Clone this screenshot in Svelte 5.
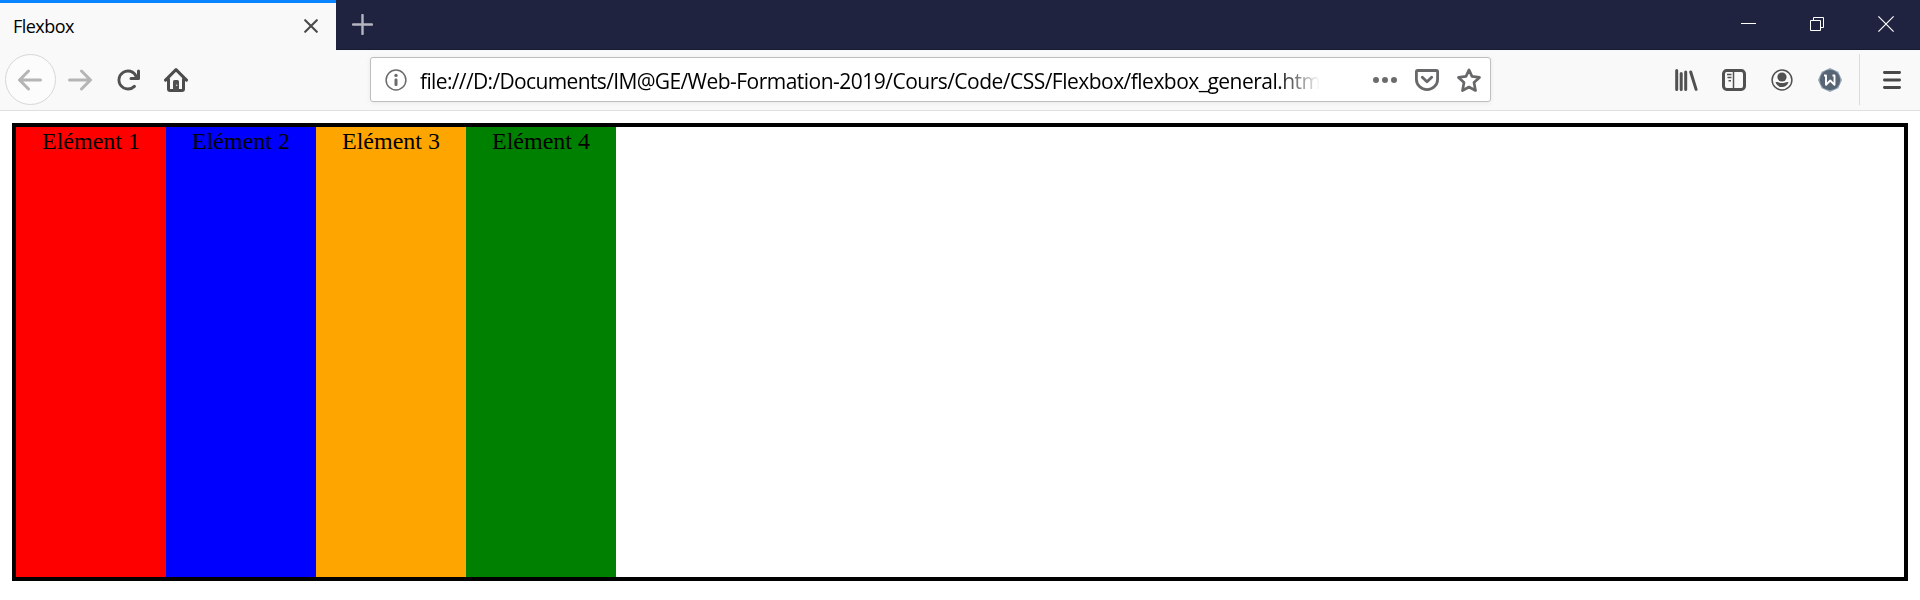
<script>
  const items = [
    { n: 1, tone: 'red' },
    { n: 2, tone: 'blue' },
    { n: 3, tone: 'orange' },
    { n: 4, tone: 'green' }
  ];
</script>

<div class="window">
  <header class="tabs">
    <div class="tab">
      <span class="title">Flexbox</span>
      <svg class="i14" viewBox="0 0 14 14"><path d="M1.2 1.2 12.8 12.8M12.8 1.2 1.2 12.8" fill="none" stroke="#4a4a4b" stroke-width="2.1" stroke-linecap="round" /></svg>
    </div>
    <svg class="plus" viewBox="0 0 21 21"><path d="M10.500 1V20M1 10.500H20" fill="none" stroke="#b5b5c1" stroke-width="2.400" stroke-linecap="round" /></svg>
    <div class="controls">
      <svg viewBox="0 0 16 16"><path d="M1 7.500H16" stroke="#fff" /></svg>
      <svg viewBox="0 0 16 16"><path d="M1.500 4.500h10v10h-10zM4.500 4.500v-3h10v10h-3" fill="none" stroke="#fff" /></svg>
      <svg viewBox="0 0 16 16"><path d="M.4.400 15.600 15.600M15.600.400.400 15.600" fill="none" stroke="#fff" stroke-width="1.150" /></svg>
    </div>
  </header>

  <nav class="toolbar">
    <div class="back">
      <svg class="dim" viewBox="0 0 16 16"><path d="M15 7H3.414l4.293-4.293a1 1 0 0 0-1.414-1.414l-6 6a1 1 0 0 0 0 1.414l6 6a1 1 0 0 0 1.414-1.414L3.414 9H15a1 1 0 0 0 0-2z" /></svg>
    </div>
    <div class="group">
      <svg class="dim" viewBox="0 0 16 16"><path d="M1 9h11.586l-4.293 4.293a1 1 0 0 0 1.414 1.414l6-6a1 1 0 0 0 0-1.414l-6-6a1 1 0 0 0-1.414 1.414L12.586 7H1a1 1 0 0 0 0 2z" /></svg>
      <svg viewBox="0 0 16 16"><path d="M15 1a1 1 0 0 0-1 1v2.418A6.995 6.995 0 1 0 8 15a6.954 6.954 0 0 0 4.950-2.050 1 1 0 0 0-1.414-1.414A5.019 5.019 0 1 1 12.549 6H10a1 1 0 0 0 0 2h5a1 1 0 0 0 1-1V2a1 1 0 0 0-1-1z" /></svg>
      <svg viewBox="0 0 16 16">
        <path d="M1 8.100 8 1.100l7 7M3 7.300V14a1 1 0 0 0 1 1h8a1 1 0 0 0 1-1V7.300" fill="none" stroke="#4c4c4d" stroke-width="2" stroke-linecap="round" stroke-linejoin="round" />
        <path d="M6 15V9a1 1 0 0 1 1-1h2a1 1 0 0 1 1 1v6z" /><circle cx="8.500" cy="11.500" r=".5" fill="#ddd" />
      </svg>
    </div>

    <div class="address">
      <svg class="soft" viewBox="0 0 24 24">
        <circle cx="12" cy="12" r="9.900" fill="none" stroke="#6b6b6c" stroke-width="1.500" />
        <circle cx="12" cy="7.400" r="1.700" /><rect x="10.500" y="10.500" width="3" height="7.500" rx="1.300" />
      </svg>
      <span class="url">file:///D:/Documents/IM@GE/<span class="mid">Web-Formation-2019/Cours/Code/CSS/Flexbox/flexbox_general.html</span></span>
      <div class="actions">
        <svg class="soft" viewBox="0 0 24 24"><circle cx="3" cy="12" r="3" /><circle cx="12" cy="12" r="3" /><circle cx="21" cy="12" r="3" /></svg>
        <svg viewBox="0 0 24 24" fill="none" stroke="#68686a" stroke-width="2.800" stroke-linecap="round" stroke-linejoin="round"><path d="M2.600 2.500h18.800q1.200 0 1.200 1.200v7.600a10.600 10.300 0 0 1-21.200 0V3.700q0-1.200 1.200-1.200z" /><path d="m7.300 9.200 4.700 4.600 4.700-4.600" /></svg>
        <svg viewBox="0 0 24 24" fill="none" stroke="#68686a" stroke-width="2.700" stroke-linejoin="round"><path d="m12 1.900 3 6.500 7.500 1-5.500 5.100 1.500 8-6.500-3.500-6.500 3.500 1.500-8-5.500-5.100 7.500-1z" /></svg>
      </div>
    </div>

    <div class="tools">
      <svg viewBox="0 0 24 24" fill="none" stroke="#515152" stroke-width="3" stroke-linecap="round"><path d="M2.700 2.600v18.800M7.200 5.500v15.900M11.700 4.100v17.300M16.700 4l5.400 17.400" /></svg>
      <svg viewBox="0 0 24 24" fill="none" stroke="#515152"><rect x="1.500" y="2.500" width="21" height="19" rx="3.200" stroke-width="3" /><path d="M11.500 3v18" stroke-width="1.500" /><path d="M5 6.500h4.500M5.500 9.500h4M6.500 12.700h2.500" stroke-width="1.500" /></svg>
      <svg viewBox="0 0 24 24"><circle cx="12" cy="12" r="9.900" fill="none" stroke="#515152" stroke-width="1.500" /><circle cx="12" cy="9" r="4.600" /><path d="M5.500 14.100c2.200-.7 3.200.9 6.500.9s4.300-1.600 6.500-.9c-1 3.300-3.300 5-6.500 5s-5.500-1.700-6.500-5z" /></svg>
      <svg viewBox="0 0 24 24"><path d="m12 0 8.300 3.700L24 12l-3.700 8.300L12 24l-8.300-3.700L0 12l3.700-8.300z" fill="#91a5b7" /><circle cx="12" cy="12" r="10.200" fill="#566473" /><path d="M6 7.500h2v9.300l4.200-4.300 4.300 4.300V7.500h-2" fill="none" stroke="#fff" stroke-width="1.900" stroke-linejoin="round" /></svg>
    </div>
    <div class="menu">
      <svg viewBox="0 0 24 24"><path d="M4.400 4.500h15.200M4.400 12h15.200M4.400 19.500h15.200" stroke="#484849" stroke-width="2.800" stroke-linecap="round" /></svg>
    </div>
  </nav>

  <main>
    <div class="container">
      {#each items as item}
        <div class="item {item.tone}">Elément {item.n}</div>
      {/each}
    </div>
  </main>
</div>

<style>
  :global(body) { margin: 0; background: #fff; }
  .window { width: 1920px; height: 600px; overflow: hidden; display: flex; flex-direction: column; }
  .window * { box-sizing: border-box; }
  svg { display: block; flex: none; width: 24px; height: 24px; fill: #515152; }
  svg[fill='none'] { fill: none; }
  .dim { fill: #b5b5b5; }
  .soft { fill: #6b6b6c; }
  .tabs { height: 50px; flex: none; display: flex; background: linear-gradient(#202340 49px, #191a31 49px); }
  .tab { width: 336px; height: 50px; border-top: 3px solid #0a84ff; background: #f9f9fa; display: flex; align-items: center; justify-content: space-between; padding: 0 18px 1px 13px; }
  .title { margin-top: -1px; font: 18px/26px "Open Sans", sans-serif; color: #000; letter-spacing: -0.55px; }
  .i14 { width: 14px; height: 14px; }
  .plus { width: 21px; height: 21px; margin: 13.5px 0 0 15.5px; }
  .controls { margin: 16px 26px 0 auto; display: flex; gap: 53px; }
  .controls svg { width: 16px; height: 16px; }
  .toolbar { height: 61px; flex: none; background: #f9f9fa; border-bottom: 1px solid #e0e0e1; display: flex; align-items: center; padding: 0 0 1px 5px; }
  .back { width: 51px; height: 51px; border: 1px solid #d7d7d8; border-radius: 50%; background: #fcfcfc; display: grid; place-items: center; padding: 1px 1px 0 0; }
  .group { display: flex; gap: 24px; margin-left: 12px; padding-top: 1px; }
  .address { width: 1121px; height: 45px; margin-left: 182px; border: 1px solid #bebebf; border-radius: 3px; background: #fff; box-shadow: 0 1px 5px rgba(0, 0, 0, 0.07); display: flex; align-items: center; padding: 1px 9px 0 13px; }
  .url { width: 900px; margin-left: 12px; padding-top: 1px; overflow: hidden; white-space: nowrap; font: 21px/30px "Open Sans", sans-serif; color: #000; letter-spacing: -0.64px; mask-image: linear-gradient(90deg, #000 calc(100% - 44px), transparent); }
  .mid { letter-spacing: -0.52px; }
  .actions { display: flex; gap: 18px; margin-left: auto; }
  .tools { display: flex; gap: 24px; margin-left: 183px; padding-top: 1px; }
  .menu { height: 51px; margin-left: 17px; padding: 1px 0 0 20px; border-left: 1px solid #dcdcdd; display: flex; align-items: center; }
  main { padding: 12px; }
  .container { width: 1896px; height: 458px; border: 4px solid #000; display: flex; }
  .item { width: 150px; text-align: center; font: 24px/29px "Liberation Serif", serif; color: #000; }
  .red { background: red; }
  .blue { background: blue; }
  .orange { background: orange; }
  .green { background: green; }
</style>
